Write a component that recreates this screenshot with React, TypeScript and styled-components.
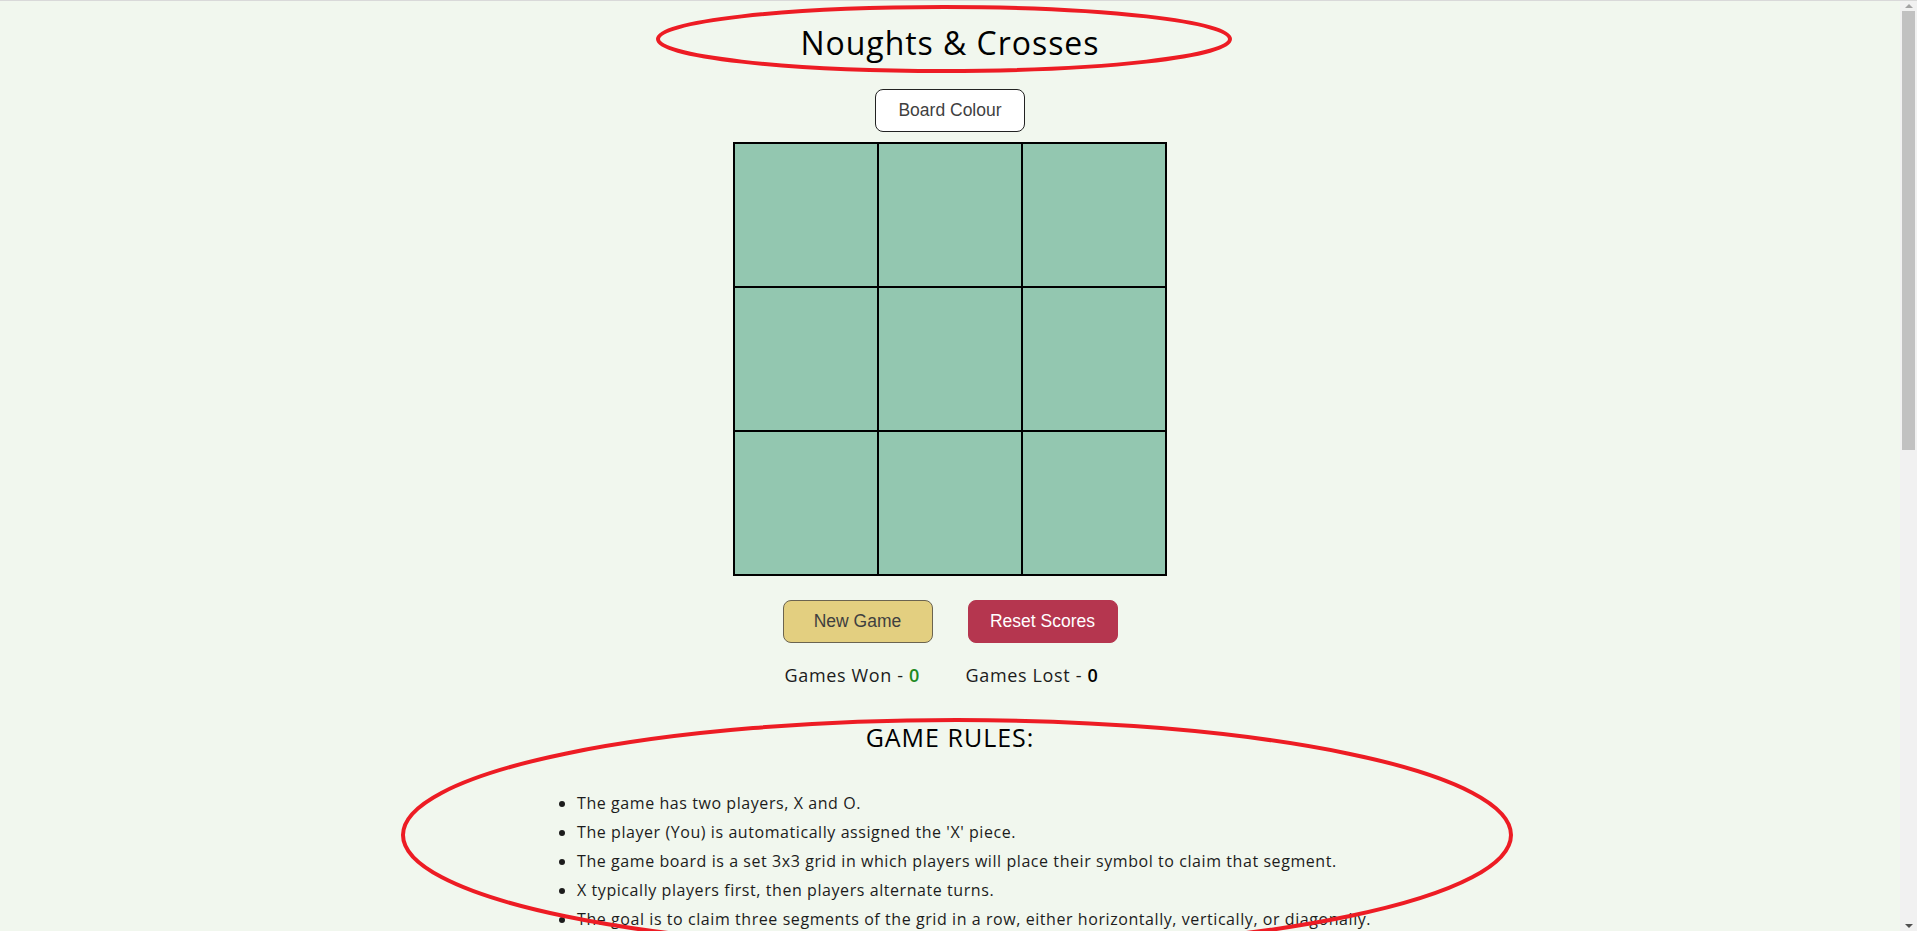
import React from "react";
import styled, { createGlobalStyle } from "styled-components";

const GlobalStyle = createGlobalStyle`
  html, body {
    margin: 0;
    padding: 0;
  }
  body {
    background: #f1f7ee;
    border-top: 1px solid #d9d9d9;
    font-family: "Open Sans", "Noto Sans", sans-serif;
    color: #1c1c1c;
  }
`;

const Page = styled.main`
  position: relative;
  margin-right: 17px;
  display: flex;
  flex-direction: column;
  align-items: center;
  padding-bottom: 880px;
`;

const Title = styled.h1`
  margin: 22px 0 0;
  font-size: 32px;
  line-height: 40px;
  font-weight: 400;
  letter-spacing: 0.95px;
  color: #000;
`;

const Button = styled.button<{ $variant: "plain" | "gold" | "red" }>`
  width: 150px;
  height: 43px;
  border-radius: 8px;
  font-family: "Liberation Sans", Arial, sans-serif;
  font-size: 17.5px;
  cursor: pointer;
  background: ${(p) =>
    p.$variant === "gold" ? "#e3cf80" : p.$variant === "red" ? "#b5364f" : "#ffffff"};
  color: ${(p) => (p.$variant === "red" ? "#ffffff" : "#3f3f3f")};
  border: 1px solid
    ${(p) => (p.$variant === "red" ? "#b5364f" : p.$variant === "gold" ? "#6b6450" : "#222222")};
`;

const ColourButton = styled(Button)`
  margin-top: 26px;
`;

const Board = styled.div`
  margin-top: 10px;
  display: grid;
  grid-template-columns: repeat(3, 142px);
  grid-template-rows: repeat(3, 142px);
  gap: 2px;
  padding: 2px;
  background: #000;
`;

const Cell = styled.div`
  background: #93c7b0;
`;

const ButtonRow = styled.div`
  margin-top: 24px;
  display: flex;
  gap: 35px;
`;

const Scores = styled.div`
  margin-top: 20px;
  display: grid;
  grid-template-columns: 150px 150px;
  column-gap: 35px;
  font-size: 18px;
  line-height: 24px;
  letter-spacing: 0.65px;
  color: #1c1c1c;
`;

const Score = styled.span<{ $shift: number }>`
  margin-left: ${(p) => p.$shift}px;
  white-space: nowrap;
`;

const Count = styled.span<{ $won?: boolean }>`
  color: ${(p) => (p.$won ? "#1e8a1e" : "#000")};
  font-weight: 600;
`;

const Rules = styled.section`
  margin-top: 34px;
  width: 826px;
`;

const RulesHeading = styled.h2`
  margin: 0;
  text-align: center;
  font-size: 25px;
  line-height: 32px;
  font-weight: 500;
  letter-spacing: 1px;
  color: #000;
`;

const RuleList = styled.ul`
  margin: 36px 0 0;
  padding-left: 40px;
`;

const Rule = styled.li`
  font-size: 16px;
  line-height: 29px;
  letter-spacing: 0.57px;
  white-space: nowrap;
  color: #1c1c1c;
`;

const Annotations = styled.svg`
  position: absolute;
  left: 0;
  top: 0;
  width: 1900px;
  height: 1000px;
  pointer-events: none;
  overflow: visible;
`;

const Gutter = styled.div`
  position: fixed;
  top: 1px;
  right: 0;
  width: 17px;
  height: calc(100vh - 1px);
  background: #f1f1f1;
  display: flex;
  flex-direction: column;
  align-items: center;
`;

const ArrowBox = styled.div`
  height: 10px;
  width: 17px;
  display: flex;
  align-items: center;
  justify-content: center;
`;

const Arrow = styled.div<{ $down?: boolean }>`
  width: 0;
  height: 0;
  border-left: 4px solid transparent;
  border-right: 4px solid transparent;
  ${(p) =>
    p.$down
      ? "border-top: 4px solid #505050;"
      : "border-bottom: 4px solid #a3a3a3;"}
`;

const Thumb = styled.div`
  width: 13px;
  height: 439px;
  background: #c1c1c1;
`;

const Spacer = styled.div`
  flex: 1;
`;

const rules = [
  "The game has two players, X and O.",
  "The player (You) is automatically assigned the 'X' piece.",
  "The game board is a set 3x3 grid in which players will place their symbol to claim that segment.",
  "X typically players first, then players alternate turns.",
  "The goal is to claim three segments of the grid in a row, either horizontally, vertically, or diagonally.",
  "The first player to claim three segments in a row wins the game.",
  "If all nine segments are claimed and no player has three in a row, the game is a draw.",
];

export default function App() {
  return (
    <>
      <GlobalStyle />
      <Page>
        <Title>Noughts &amp; Crosses</Title>
        <ColourButton $variant="plain">Board Colour</ColourButton>
        <Board>
          {Array.from({ length: 9 }).map((_, i) => (
            <Cell key={i} />
          ))}
        </Board>
        <ButtonRow>
          <Button $variant="gold">New Game</Button>
          <Button $variant="red">Reset Scores</Button>
        </ButtonRow>
        <Scores>
          <Score $shift={2}>
            Games Won - <Count $won>0</Count>
          </Score>
          <Score $shift={-2}>
            Games Lost - <Count>0</Count>
          </Score>
        </Scores>
        <Rules>
          <RulesHeading>GAME RULES:</RulesHeading>
          <RuleList>
            {rules.map((r) => (
              <Rule key={r}>{r}</Rule>
            ))}
          </RuleList>
        </Rules>
        <Annotations viewBox="0 0 1900 1000">
          <ellipse cx="944" cy="38" rx="286" ry="32" fill="none" stroke="#ed1c24" strokeWidth="4" />
          <ellipse cx="957" cy="834" rx="554" ry="115" fill="none" stroke="#ed1c24" strokeWidth="4" />
        </Annotations>
      </Page>
      <Gutter aria-hidden="true">
        <ArrowBox>
          <Arrow />
        </ArrowBox>
        <Thumb />
        <Spacer />
        <ArrowBox>
          <Arrow $down />
        </ArrowBox>
      </Gutter>
    </>
  );
}
